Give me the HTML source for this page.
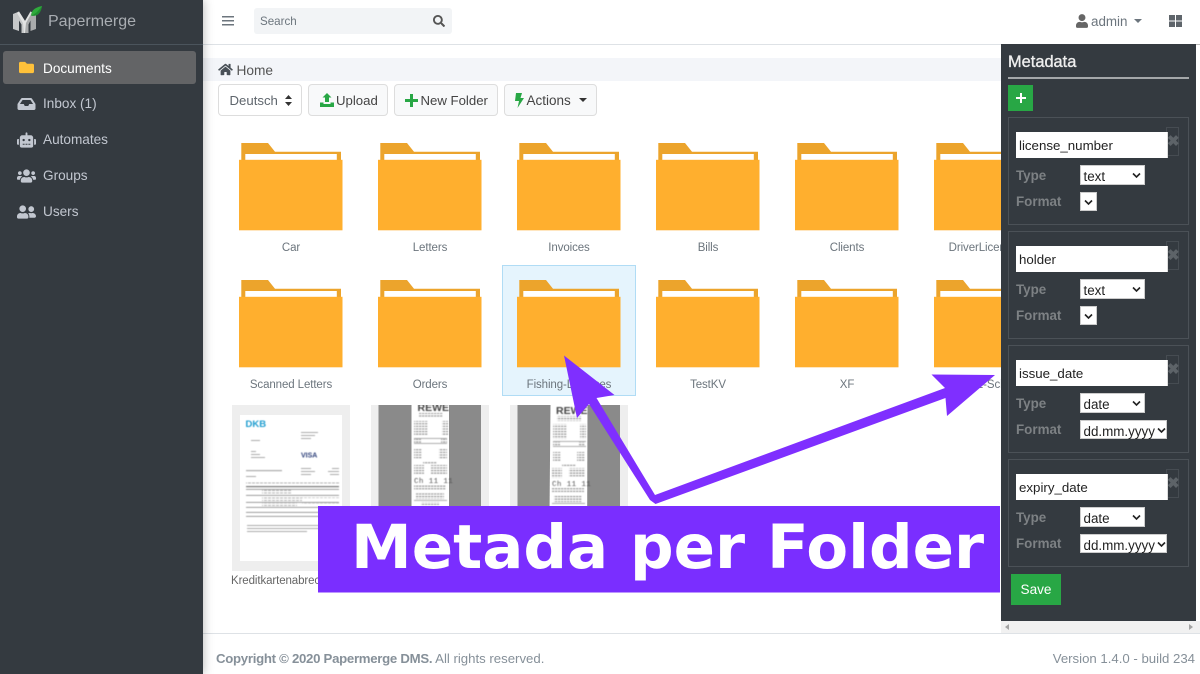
<!DOCTYPE html>
<html><head><meta charset="utf-8"><title>Papermerge</title>
<style>
*{box-sizing:border-box}
html,body{margin:0;padding:0;width:1200px;height:674px;overflow:hidden;background:#fff;font-family:"Liberation Sans",sans-serif;color:#495057}
.a{position:absolute}
#side{left:0;top:0;width:203px;height:674px;background:#343a40;box-shadow:0 0 10px rgba(0,0,0,.3);z-index:5}
.nav{position:absolute;left:3px;width:193px;height:33px;border-radius:3px;color:#c2c7d0;font-size:13.6px;line-height:33.500px;padding-left:40px}
.nav svg{position:absolute;left:14px;top:8.5px;width:19px;height:16px;fill:#c2c7d0}
.fold{position:absolute;width:104px;height:88px}
.lbl{position:absolute;width:134px;text-align:center;font-size:11.5px;letter-spacing:-.1px;color:#6c757d;white-space:nowrap;height:16px;line-height:16px;overflow:hidden}
.btn{position:absolute;top:84px;height:32px;background:#f8f9fa;border:1px solid #ddd;border-radius:4px;font-size:13.2px;line-height:31px;color:#444;white-space:nowrap}
.btn svg{position:absolute}
#panel{left:1001px;top:44px;width:195px;height:577px;background:#343a40;z-index:4;overflow:hidden}
.card{position:absolute;left:7px;width:181px;height:108px;border:1px solid #4b5157}
.inp{position:absolute;z-index:1;left:7px;top:13.5px;width:152px;height:26.500px;background:#fff;color:#222;font-size:13.3px;line-height:27px;padding-left:3px;border-right:1.5px solid #ddd}
.x{position:absolute;left:157px;top:8.500px;width:13px;height:29px;border:1px solid #464c52;color:#5d6368;font-size:15px;font-weight:bold;line-height:27px;text-align:center}
.t{position:absolute;left:7px;font-size:13.4px;font-weight:bold;color:#7d8184;line-height:20px}
.sel{position:absolute;left:70.500px;height:19.500px;background:#fff;color:#222;font-size:13.4px;line-height:21px;padding-left:3px;border:.5px solid #ccc;white-space:nowrap}
.sel svg{position:absolute;top:6px;right:3.5px;width:9px;height:7px}
</style></head><body>

<svg width="0" height="0" style="position:absolute"><defs>
 <symbol id="f" viewBox="0 0 104 88">
 <path d="M2.300 0H29l7 8.700h66v9H2.300z" fill="#eca42c"/>
 <rect x="6.300" y="11" width="91.500" height="7" fill="#fff"/>
 <rect x="0" y="16.800" width="103.500" height="70.500" fill="#ffaf2e"/>
 </symbol>
 <pattern id="rl" patternUnits="userSpaceOnUse" width="3" height="2.600"><rect width="2.300" height="1.100" fill="#8f8f8f"/></pattern>
 <pattern id="tb" patternUnits="userSpaceOnUse" width="4" height="2.500"><rect width="3" height=".9" fill="#aaa"/></pattern>
</defs></svg>

<div class="a" id="side">
 <svg class="a" style="left:0;top:0" width="50" height="40" viewBox="0 0 50 40">
  <path d="M13 14l6-2.500 6 9.500v12h-3.500v-8.500L19 20.500V31l-6-2z" fill="#c6c8c9"/>
  <path d="M36 14l-5.500-2.500L25 21v12h3.500v-8.500l2-4V31l5.500-2z" fill="#a9abac"/>
  <path d="M19 11.500l6 9.500 5.500-9.500 1.500 1-6 10.500-1 10h-1l-1-10-6-10z" fill="#e2e3e3"/>
  <path d="M31 15.500C31.500 10 35 7.500 42 6c-1 6-4 11-11 9.500z" fill="#2faa3c"/>
  <path d="M31 15.500c4-1 7-4 11-9.500-1 6-4 11-11 9.500z" fill="#1f8f30"/>
 </svg>
 <div class="a" style="left:48px;top:11px;font-size:16px;line-height:22px;color:#a9adb2">Papermerge</div>
 <div class="a" style="left:0;top:44px;width:203px;height:1px;background:#4b545c"></div>
 <div class="nav" style="top:51px;background:#636466;color:#fff;line-height:35px"><svg viewBox="0 0 512 512" style="fill:#ffc13a;left:16px;width:15px;height:15px"><path d="M464 128H272l-64-64H48C21.49 64 0 85.49 0 112v288c0 26.51 21.49 48 48 48h416c26.51 0 48-21.49 48-48V176c0-26.51-21.49-48-48-48z"/></svg>Documents</div>
 <div class="nav" style="top:87px"><svg viewBox="0 0 576 512"><path d="M567.938 243.908L462.25 85.374A48.003 48.003 0 0 0 422.311 64H153.689a48 48 0 0 0-39.938 21.374L8.062 243.908A47.994 47.994 0 0 0 0 270.533V400c0 26.51 21.49 48 48 48h480c26.51 0 48-21.49 48-48V270.533a47.994 47.994 0 0 0-8.062-26.625zM162.252 128h251.497l85.333 128H376l-32 64H232l-32-64H76.918l85.334-128z"/></svg>Inbox (1)</div>
 <div class="nav" style="top:123px"><svg viewBox="0 0 640 512"><path d="M32,224H64V416H32A31.96166,31.96166,0,0,1,0,384V256A31.96166,31.96166,0,0,1,32,224Zm512-48V448a64.06328,64.06328,0,0,1-64,64H160a64.06328,64.06328,0,0,1-64-64V176a79.974,79.974,0,0,1,80-80H288V32a32,32,0,0,1,64,0V96H464A79.974,79.974,0,0,1,544,176ZM264,256a40,40,0,1,0-40,40A39.997,39.997,0,0,0,264,256Zm-8,128H192v32h64Zm96,0H288v32h64ZM456,256a40,40,0,1,0-40,40A39.997,39.997,0,0,0,456,256Zm-8,128H384v32h64ZM640,256V384a31.96166,31.96166,0,0,1-32,32H576V224h32A31.96166,31.96166,0,0,1,640,256Z"/></svg>Automates</div>
 <div class="nav" style="top:159px"><svg viewBox="0 0 640 512"><path d="M96 224c35.3 0 64-28.7 64-64s-28.7-64-64-64-64 28.7-64 64 28.7 64 64 64zm448 0c35.3 0 64-28.7 64-64s-28.7-64-64-64-64 28.7-64 64 28.7 64 64 64zm32 32h-64c-17.6 0-33.5 7.1-45.1 18.6 40.3 22.1 68.9 62 75.1 109.4h66c17.7 0 32-14.3 32-32v-32c0-35.3-28.7-64-64-64zm-256 0c61.9 0 112-50.1 112-112S381.9 32 320 32 208 82.1 208 144s50.1 112 112 112zm76.8 32h-8.3c-20.8 10-43.9 16-68.5 16s-47.6-6-68.5-16h-8.3C179.6 288 128 339.6 128 403.2V432c0 26.5 21.5 48 48 48h288c26.5 0 48-21.5 48-48v-28.8c0-63.6-51.6-115.2-115.2-115.2zm-223.7-13.4C161.5 263.1 145.6 256 128 256H64c-35.3 0-64 28.7-64 64v32c0 17.7 14.3 32 32 32h65.9c6.3-47.4 34.9-87.3 75.2-109.4z"/></svg>Groups</div>
 <div class="nav" style="top:195px"><svg viewBox="0 0 640 512"><path d="M192 256c61.9 0 112-50.1 112-112S253.9 32 192 32 80 82.1 80 144s50.1 112 112 112zm76.8 32h-8.3c-20.8 10-43.9 16-68.5 16s-47.6-6-68.5-16h-8.3C51.6 288 0 339.6 0 403.2V432c0 26.5 21.5 48 48 48h288c26.5 0 48-21.5 48-48v-28.8c0-63.6-51.6-115.2-115.2-115.2zM480 256c53 0 96-43 96-96s-43-96-96-96-96 43-96 96 43 96 96 96zm48 32h-3.8c-13.9 4.8-28.6 8-44.2 8s-30.3-3.2-44.2-8H432c-20.4 0-39.2 5.9-55.7 15.4 24.4 26.3 39.7 61.2 39.7 99.8v38.4c0 2.2-.5 4.3-.6 6.4H592c26.5 0 48-21.5 48-48 0-61.9-50.1-112-112-112z"/></svg>Users</div>
</div>

<!-- header -->
<div class="a" style="left:203px;top:44px;width:997px;height:1px;background:#dee2e6"></div>
<svg class="a" style="left:222px;top:15px" width="12" height="12" viewBox="0 0 12 12" fill="#6c757d"><rect y="1" width="12" height="1.5"/><rect y="5" width="12" height="1.5"/><rect y="9" width="12" height="1.5"/></svg>
<div class="a" style="left:254px;top:8px;width:198px;height:26px;background:#f2f4f6;border-radius:3px;font-size:11.6px;line-height:27.500px;color:#6c757d;padding-left:6px">Search</div>
<svg class="a" style="left:433px;top:15px" width="12" height="12" viewBox="0 0 512 512" fill="#555"><path d="M505 442.7L405.3 343c-4.5-4.5-10.6-7-17-7H372c27.6-35.3 44-79.7 44-128C416 93.1 322.9 0 208 0S0 93.1 0 208s93.1 208 208 208c48.3 0 92.7-16.4 128-44v16.3c0 6.4 2.5 12.5 7 17l99.7 99.7c9.4 9.4 24.6 9.4 33.9 0l28.3-28.3c9.4-9.4 9.4-24.6.1-34zM208 336c-70.7 0-128-57.2-128-128 0-70.7 57.2-128 128-128 70.7 0 128 57.2 128 128 0 70.7-57.2 128-128 128z"/></svg>
<svg class="a" style="left:1076px;top:14px" width="12" height="14" viewBox="0 0 448 512" fill="#666"><path d="M224 256c70.7 0 128-57.3 128-128S294.7 0 224 0 96 57.3 96 128s57.3 128 128 128zm89.6 32h-16.7c-22.2 10.2-46.9 16-71 16s-48.7-5.8-71-16h-16.7C60.2 288 0 348.2 0 422.4V464c0 26.5 21.5 48 48 48h352c26.5 0 48-21.5 48-48v-41.6c0-74.2-60.2-134.4-134.4-134.4z"/></svg>
<div class="a" style="left:1091px;top:14px;font-size:13.4px;line-height:16px;color:#6c757d">admin</div>
<div class="a" style="left:1134px;top:18.5px;border:4px solid transparent;border-top:4px solid #6c757d;border-bottom:0"></div>
<svg class="a" style="left:1169px;top:15px" width="13" height="12" viewBox="0 0 13 12" fill="#5f656b"><rect width="6" height="5.5"/><rect x="7" width="6" height="5.5"/><rect y="6.5" width="6" height="5.5"/><rect x="7" y="6.5" width="6" height="5.5"/></svg>

<!-- breadcrumb -->
<div class="a" style="left:203px;top:58px;width:800px;height:23px;background:#f3f5f9"></div>
<svg class="a" style="left:218px;top:63px" width="15" height="13" viewBox="0 0 576 512" fill="#495057"><path d="M280.37 148.26L96 300.11V464a16 16 0 0 0 16 16l112.06-.29a16 16 0 0 0 15.92-16V368a16 16 0 0 1 16-16h64a16 16 0 0 1 16 16v95.64a16 16 0 0 0 16 16.05L464 480a16 16 0 0 0 16-16V300L295.67 148.26a12.19 12.19 0 0 0-15.3 0zM571.6 251.47L488 182.56V44.05a12 12 0 0 0-12-12h-56a12 12 0 0 0-12 12v72.61L318.47 43a48 48 0 0 0-61 0L4.34 251.47a12 12 0 0 0-1.6 16.9l25.5 31A12 12 0 0 0 45.15 301l235.22-193.74a12.19 12.19 0 0 1 15.3 0L530.9 301a12 12 0 0 0 16.9-1.6l25.5-31a12 12 0 0 0-1.7-16.93z"/></svg>
<div class="a" style="left:236.5px;top:62px;font-size:13.7px;line-height:18px;color:#555">Home</div>

<!-- toolbar -->
<div class="btn" style="left:218px;width:84px;background:#fff;padding-left:10.5px;color:#5f666d">Deutsch
 <svg style="left:66px;top:10px" width="7" height="11" viewBox="0 0 7 11" fill="#333"><path d="M3.5 0L7 4H0zM3.5 11L0 7h7z"/></svg></div>
<div class="btn" style="left:308px;width:80px;padding-left:27px">Upload
 <svg style="left:10.5px;top:8px" width="14" height="14" viewBox="0 0 14 14" fill="#28a745"><path d="M7 0l4.5 4.5H9V9H5V4.5H2.5zM0 9.5h3.500V11h7V9.5H14V14H0z"/></svg></div>
<div class="btn" style="left:394px;width:104px;padding-left:25.5px">New Folder
 <svg style="left:10px;top:9px" width="13" height="13" viewBox="0 0 13 13" fill="#28a745"><path d="M5 0h3v5h5v3H8v5H5V8H0V5h5z"/></svg></div>
<div class="btn" style="left:504px;width:93px;padding-left:21.5px;font-size:13.5px">Actions
 <svg style="left:9.5px;top:7.5px" width="9" height="15" viewBox="0 0 9 15" fill="#28a745"><path d="M1 0h6L5.500 5H9L2.500 15l1.500-7H0z"/></svg>
 <span class="a" style="left:74px;top:13px;border:4px solid transparent;border-top:4px solid #333;border-bottom:0"></span></div>

<!-- selected -->
<div class="a" style="left:502px;top:264.500px;width:134px;height:131.500px;background:#e5f4fd;border:1px solid #b0dcf5"></div>

<svg class="fold" style="left:239px;top:143px"><use href="#f"/></svg>
<svg class="fold" style="left:378px;top:143px"><use href="#f"/></svg>
<svg class="fold" style="left:517px;top:143px"><use href="#f"/></svg>
<svg class="fold" style="left:656px;top:143px"><use href="#f"/></svg>
<svg class="fold" style="left:795px;top:143px"><use href="#f"/></svg>
<svg class="fold" style="left:934px;top:143px"><use href="#f"/></svg>
<svg class="fold" style="left:239px;top:279.500px"><use href="#f"/></svg>
<svg class="fold" style="left:378px;top:279.500px"><use href="#f"/></svg>
<svg class="fold" style="left:517px;top:279.500px"><use href="#f"/></svg>
<svg class="fold" style="left:656px;top:279.500px"><use href="#f"/></svg>
<svg class="fold" style="left:795px;top:279.500px"><use href="#f"/></svg>
<svg class="fold" style="left:934px;top:279.500px"><use href="#f"/></svg>

<div class="lbl" style="left:224px;top:240px">Car</div>
<div class="lbl" style="left:363px;top:240px">Letters</div>
<div class="lbl" style="left:502px;top:240px">Invoices</div>
<div class="lbl" style="left:641px;top:240px">Bills</div>
<div class="lbl" style="left:780px;top:240px">Clients</div>
<div class="lbl" style="left:919px;top:240px">DriverLicenses</div>
<div class="lbl" style="left:224px;top:377px">Scanned Letters</div>
<div class="lbl" style="left:363px;top:377px">Orders</div>
<div class="lbl" style="left:502px;top:377px">Fishing-Licenses</div>
<div class="lbl" style="left:641px;top:377px">TestKV</div>
<div class="lbl" style="left:780px;top:377px">XF</div>
<div class="lbl" style="left:919px;top:377px">Lizenz-Schule</div>

<!-- thumbs -->
<svg class="a" style="left:232px;top:405px" width="118" height="166" viewBox="0 0 118 166">
 <rect width="118" height="166" fill="#eee"/>
 <rect x="8" y="10" width="102" height="146" fill="#fff"/>
 <g style="filter:blur(.45px)">
 <text x="13.500" y="22" font-family="Liberation Sans" font-weight="bold" font-size="9.500" fill="#1c9ccf">DKB</text>
 <text x="69" y="52.500" font-family="Liberation Sans" font-weight="bold" font-size="7" fill="#2b3e78">VISA</text>
 <g fill="#aaa">
 <rect x="69" y="27" width="17" height="1"/><rect x="69" y="30" width="14" height="1"/><rect x="69" y="33" width="10" height="1"/>
 <rect x="19" y="35" width="9" height="1"/><rect x="19" y="46" width="5" height="1"/><rect x="19" y="49" width="9" height="1"/><rect x="19" y="52" width="14" height="1"/>
 <rect x="14" y="65" width="36" height="1.200"/><rect x="14" y="71" width="10" height="1"/>
 <rect x="69" y="63" width="10" height="1"/><rect x="69" y="66" width="14" height="1"/><rect x="69" y="69" width="10" height="1"/>
 <rect x="100" y="63" width="7" height="1"/><rect x="96" y="66" width="11" height="1"/><rect x="98" y="69" width="9" height="1"/>
 <rect x="15" y="120" width="80" height="1"/><rect x="15" y="123" width="90" height="1"/><rect x="15" y="126" width="60" height="1"/>
 </g>
 <rect x="14" y="77" width="93" height="3" fill="url(#tb)"/>
 <g fill="#777">
 <rect x="14" y="81" width="93" height="1.200"/><rect x="14" y="84" width="93" height=".7"/><rect x="14" y="90" width="93" height=".7"/>
 <rect x="14" y="97" width="93" height=".7"/><rect x="14" y="102" width="93" height=".7"/><rect x="14" y="107" width="93" height=".7"/><rect x="14" y="111" width="93" height=".7"/>
 </g>
 <rect x="30" y="85" width="30" height="5" fill="url(#tb)"/><rect x="30" y="91" width="40" height="6" fill="url(#tb)"/><rect x="30" y="98" width="35" height="4" fill="url(#tb)"/>
 <rect x="70" y="91" width="37" height="2" fill="url(#tb)"/><rect x="70" y="98" width="37" height="2" fill="url(#tb)"/>
 </g>
</svg>
<svg class="a" style="left:371px;top:405px" width="118" height="166" viewBox="0 0 118 166">
 <rect width="118" height="166" fill="#eee"/>
 <rect x="7.500" width="102.500" height="166" fill="#8a8a8a"/>
 <rect x="40.500" width="37.500" height="166" fill="#fff"/>
 <g style="filter:blur(.45px)">
 <text x="46.500" y="6" font-family="Liberation Sans" font-weight="bold" font-size="10.500" fill="#444">REWE</text>
 <rect x="48" y="8" width="24" height="5" fill="url(#rl)"/>
 <rect x="43" y="16" width="14" height="15" fill="url(#rl)"/><rect x="71" y="16" width="6" height="15" fill="url(#rl)"/>
 <rect x="43" y="33" width="33" height=".8" fill="#999"/><rect x="43" y="38" width="33" height=".8" fill="#999"/>
 <rect x="43" y="34" width="7" height="4" fill="url(#rl)"/><rect x="70" y="34" width="6" height="4" fill="url(#rl)"/>
 <rect x="43" y="44" width="8" height="10" fill="url(#rl)"/><rect x="68" y="44" width="8" height="10" fill="url(#rl)"/>
 <rect x="52" y="56" width="14" height="3" fill="url(#rl)"/><rect x="43" y="60" width="10" height="10" fill="url(#rl)"/><rect x="60" y="60" width="16" height="9" fill="url(#rl)"/>
 <text x="43" y="78" font-family="Liberation Mono" font-size="7.500" letter-spacing=".4" fill="#555">Ch 11 11</text>
 <rect x="43" y="80" width="32" height="5" fill="url(#rl)"/>
 <rect x="45" y="87" width="28" height="7" fill="url(#rl)"/><rect x="43" y="95" width="33" height=".8" fill="#999"/>
 <rect x="50" y="97" width="18" height="3" fill="url(#rl)"/>
 </g>
</svg>
<svg class="a" style="left:510px;top:405px" width="118" height="166" viewBox="0 0 118 166">
 <rect width="118" height="166" fill="#eee"/>
 <rect x="7.500" width="102.500" height="166" fill="#8a8a8a"/>
 <path d="M40.500 0h37L77 166H39z" fill="#fff"/>
 <g style="filter:blur(.45px)">
 <text x="46" y="9" font-family="Liberation Sans" font-weight="bold" font-size="10.500" fill="#444">REWE</text>
 <rect x="47" y="11" width="24" height="5" fill="url(#rl)"/>
 <rect x="43" y="19" width="14" height="15" fill="url(#rl)"/><rect x="70" y="19" width="6" height="15" fill="url(#rl)"/>
 <rect x="43" y="36" width="33" height=".8" fill="#999"/><rect x="43" y="41" width="33" height=".8" fill="#999"/>
 <rect x="43" y="37" width="7" height="4" fill="url(#rl)"/><rect x="69" y="37" width="6" height="4" fill="url(#rl)"/>
 <rect x="43" y="47" width="8" height="10" fill="url(#rl)"/><rect x="67" y="47" width="8" height="10" fill="url(#rl)"/>
 <rect x="52" y="59" width="14" height="3" fill="url(#rl)"/><rect x="42" y="63" width="10" height="10" fill="url(#rl)"/><rect x="59" y="63" width="16" height="9" fill="url(#rl)"/>
 <text x="42" y="81" font-family="Liberation Mono" font-size="7.500" letter-spacing=".4" fill="#555">Ch 11 11</text>
 <rect x="42" y="83" width="32" height="5" fill="url(#rl)"/>
 <rect x="44" y="90" width="28" height="7" fill="url(#rl)"/><rect x="42" y="98" width="33" height=".8" fill="#999"/>
 </g>
</svg>
<div class="lbl" style="left:231px;top:573px;width:90px;text-align:left;color:#666">Kreditkartenabrechnung</div>

<!-- footer -->
<div class="a" style="left:203px;top:633px;width:997px;height:1px;background:#dee2e6"></div>
<div class="a" style="left:216px;top:651px;font-size:13.2px;line-height:16px;color:#869099;white-space:nowrap"><b style="letter-spacing:-.28px">Copyright © 2020 Papermerge DMS.</b> All rights reserved.</div>
<div class="a" style="right:5px;top:651px;font-size:13.2px;line-height:16px;color:#869099;white-space:nowrap">Version 1.4.0 - build 234</div>

<!-- scrollbar -->
<div class="a" style="left:1001px;top:621px;width:199px;height:12px;background:#f1f1f1"></div>
<div class="a" style="left:1005px;top:624px;border:3px solid transparent;border-right:4px solid #a3a3a3;border-left:0"></div>
<div class="a" style="left:1189px;top:624px;border:3px solid transparent;border-left:4px solid #a3a3a3;border-right:0"></div>
<div class="a" style="left:1001px;top:44px;width:199px;height:1px;background:#bbb;z-index:3"></div>

<!-- metadata panel -->
<div class="a" id="panel">
 <div class="a" style="left:7px;top:8px;font-size:16.400px;line-height:20px;-webkit-text-stroke:.35px #eee;color:#eee;white-space:nowrap">Metadata</div>
 <div class="a" style="left:7px;top:33px;width:181px;height:1.500px;background:#a4a7a9"></div>
 <div class="a" style="left:7px;top:41px;width:25px;height:26px;background:#28a745"></div>
 <svg class="a" style="left:15px;top:49px" width="10" height="10" viewBox="0 0 10 10" fill="#fff"><path d="M4 0h2v4h4v2H6v4H4V6H0V4h4z"/></svg>

 <div class="card" style="top:73px"><div class="inp">license_number</div><div class="x">✖</div>
  <div class="t" style="top:48px">Type</div><div class="sel" style="top:47px;width:65.500px">text<svg viewBox="0 0 9 7"><path d="M1 1.500l3.500 3.500L8 1.500" fill="none" stroke="#222" stroke-width="1.600"/></svg></div>
  <div class="t" style="top:74px">Format</div><div class="sel" style="top:73.500px;width:17.500px"><svg viewBox="0 0 9 7"><path d="M1 1.500l3.500 3.500L8 1.500" fill="none" stroke="#222" stroke-width="1.600"/></svg></div></div>

 <div class="card" style="top:187px"><div class="inp">holder</div><div class="x">✖</div>
  <div class="t" style="top:48px">Type</div><div class="sel" style="top:47px;width:65.500px">text<svg viewBox="0 0 9 7"><path d="M1 1.500l3.500 3.500L8 1.500" fill="none" stroke="#222" stroke-width="1.600"/></svg></div>
  <div class="t" style="top:74px">Format</div><div class="sel" style="top:73.500px;width:17.500px"><svg viewBox="0 0 9 7"><path d="M1 1.500l3.500 3.500L8 1.500" fill="none" stroke="#222" stroke-width="1.600"/></svg></div></div>

 <div class="card" style="top:301px"><div class="inp">issue_date</div><div class="x">✖</div>
  <div class="t" style="top:48px">Type</div><div class="sel" style="top:47px;width:65.500px">date<svg viewBox="0 0 9 7"><path d="M1 1.500l3.500 3.500L8 1.500" fill="none" stroke="#222" stroke-width="1.600"/></svg></div>
  <div class="t" style="top:74px">Format</div><div class="sel" style="top:73.500px;width:87.500px">dd.mm.yyyy<svg style="right:.5px" viewBox="0 0 9 7"><path d="M1 1.500l3.500 3.500L8 1.500" fill="none" stroke="#222" stroke-width="1.600"/></svg></div></div>

 <div class="card" style="top:415px"><div class="inp">expiry_date</div><div class="x">✖</div>
  <div class="t" style="top:48px">Type</div><div class="sel" style="top:47px;width:65.500px">date<svg viewBox="0 0 9 7"><path d="M1 1.500l3.500 3.500L8 1.500" fill="none" stroke="#222" stroke-width="1.600"/></svg></div>
  <div class="t" style="top:74px">Format</div><div class="sel" style="top:73.500px;width:87.500px">dd.mm.yyyy<svg style="right:.5px" viewBox="0 0 9 7"><path d="M1 1.500l3.500 3.500L8 1.500" fill="none" stroke="#222" stroke-width="1.600"/></svg></div></div>

 <div class="a" style="left:10px;top:530px;width:50px;height:31px;background:#28a745;color:#fff;font-size:13.600px;line-height:32px;text-align:center">Save</div>
</div>

<!-- banner & arrows -->
<svg class="a" style="left:0;top:0;z-index:6" width="1200" height="674" viewBox="0 0 1200 674">
 <path d="M564 355.500L614.500 395 596.500 398 655 495 945 388 931.500 374.500 995 375 947 416 945.500 398 655.500 504 650 500 589 404 577 418z" fill="#7f2fff"/>
 <rect x="318" y="506" width="682" height="86.500" fill="#7a2eff"/>
 <text y="568" font-family="DejaVu Sans" font-weight="bold" font-size="61" fill="#fff"><tspan x="351">Metada</tspan> <tspan x="630">per</tspan> <tspan x="767">Folder</tspan></text>
</svg>
</body></html>
